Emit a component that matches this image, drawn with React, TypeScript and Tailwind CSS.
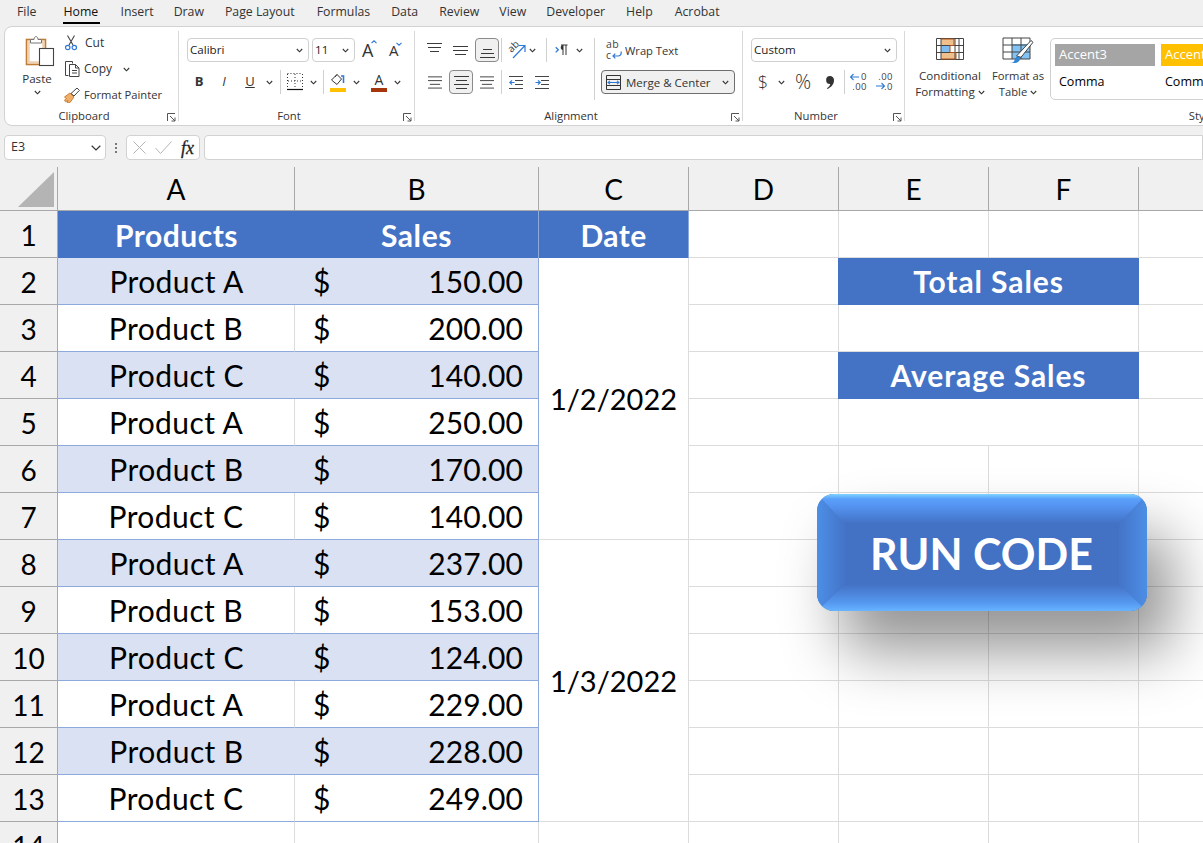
import React from "react";

const ui = "font-['Open_Sans','Liberation_Sans',sans-serif]";
const cal = "font-['Lato','Liberation_Sans',sans-serif]";

function Chev({ className = "" }: { className?: string }) {
  return (
    <svg viewBox="0 0 7 5" className={"w-[7px] h-[5px] " + className} fill="none" stroke="#333" strokeWidth="1.1">
      <path d="M.8 1 3.5 3.8 6.2 1" />
    </svg>
  );
}
function Launcher() {
  return (
    <svg viewBox="0 0 9 9" className="absolute right-[2px] top-[4px] w-[9px] h-[9px]" fill="none" stroke="#555" strokeWidth="1">
      <path d="M.5 8V.5H8M3 3l5 5M8 4.5V8H4.5" />
    </svg>
  );
}
function Group({ w, label, children }: { w: string; label: string; children: React.ReactNode }) {
  return (
    <div className={"my-[4px] h-[90px] flex flex-col shrink-0 border-r border-[#d9d9d9] " + w}>
      <div className="h-[78px] pt-[7px]">{children}</div>
      <div className="relative h-[12px] flex items-center justify-center text-[11.3px] text-[#333] leading-none pt-[1px] pr-[15px]">
        {label}
        <Launcher />
      </div>
    </div>
  );
}
function VSep({ className = "" }: { className?: string }) {
  return <div className={"w-px h-[24px] bg-[#d0d0d0] shrink-0 " + className} />;
}
function Slot({ className, children }: { className: string; children: React.ReactNode }) {
  return <div className={"h-[24px] flex items-center justify-center shrink-0 " + className}>{children}</div>;
}
function Lines({ rows, className = "" }: { rows: [number, number][]; className?: string }) {
  return (
    <svg viewBox="0 0 15 16" className={"w-[15px] h-[16px] " + className} stroke="#3a3a3a" strokeWidth="1">
      {rows.map(([y, x], i) => (
        <line key={i} x1={x} x2={15 - x} y1={y + 0.5} y2={y + 0.5} />
      ))}
    </svg>
  );
}

function PasteIcon() {
  return (
    <svg viewBox="0 0 30 32" className="w-[30px] h-[32px]">
      <rect x="1.5" y="4.5" width="19" height="25" fill="#fbe9d4" stroke="#c07f38" strokeWidth="1.6" />
      <rect x="4" y="7" width="14" height="20" fill="#fff" stroke="#e5b98a" strokeWidth="1" />
      <path d="M5.5 8V4.5h3.5c.4-2 1-3 2-3s1.6 1 2 3h3.5V8z" fill="#fff" stroke="#777" strokeWidth="1" />
      <rect x="14.5" y="13.5" width="14" height="17" fill="#fff" stroke="#444" strokeWidth="1.1" />
    </svg>
  );
}
function CutIcon() {
  return (
    <svg viewBox="0 0 14 16" className="w-[14px] h-[16px]" fill="none">
      <path d="M3.5 .5 9 10M10.5.5 5 10" stroke="#444" strokeWidth="1.1" />
      <circle cx="3.7" cy="12.5" r="2.2" stroke="#2f79d6" strokeWidth="1.2" />
      <circle cx="10.3" cy="12.5" r="2.2" stroke="#2f79d6" strokeWidth="1.2" />
    </svg>
  );
}
function CopyIcon() {
  return (
    <svg viewBox="0 0 17 16" className="w-[17px] h-[16px]" fill="none" stroke="#444" strokeWidth="1">
      <path d="M4.5 14.5h-3V.5h7v2" />
      <path d="M5.500 3.500h6l3.500 3.500v8.500H5.500z" fill="#fff" />
      <path d="M11.500 3.500V7H15M8 9.500h5M8 12h5" />
    </svg>
  );
}
function PainterIcon() {
  return (
    <svg viewBox="0 0 16 16" className="w-[16px] h-[16px]">
      <path d="M.5 10 6 6l4 4-4 5.500c-2 .3-3 0-3 0l1-2-2.500 1.200L.5 13l2-1.500z" fill="#f0b06a" stroke="#c8742a" strokeWidth=".9" />
      <path d="m7 6.500 6-5.500 2.400 2.400L10 9z" fill="#fff" stroke="#444" strokeWidth="1" />
    </svg>
  );
}
function BorderIcon() {
  return (
    <svg viewBox="0 0 16 18" className="w-[16px] h-[18px]" fill="none" stroke="#333" strokeWidth="1">
      <path d="M.5.5h15M.5 1v14M15.500 1v14M8 1v14M1 8h14" strokeDasharray="1 2" />
      <path d="M0 16.500h16" strokeWidth="1.2" stroke="#111" />
    </svg>
  );
}
function FillIcon() {
  return (
    <div className="w-[16px] h-[19px] flex flex-col items-center">
      <svg viewBox="0 0 16 14" className="w-[16px] h-[14px]" fill="none">
        <path d="M7 1.500 11.500 6 7 11.500 1.500 7z" stroke="#333" strokeWidth="1" />
        <path d="M7 1.500 5 4" stroke="#333" strokeWidth="1" />
        <path d="M11 3h2.500v7" stroke="#2f79d6" strokeWidth="1.6" />
      </svg>
      <div className="w-[16px] h-[4px] mt-[1px] bg-[#ffc000]" />
    </div>
  );
}
function OrientIcon() {
  return (
    <div className="relative w-[18px] h-[17px]">
      <span className="absolute left-[-1px] top-[-2px] -rotate-45 text-[10px] leading-[12px] text-[#333]">ab</span>
      <svg viewBox="0 0 18 17" className="absolute inset-0 w-[18px] h-[17px]" fill="none">
        <path d="M5 16 16.500 4M11 3.500h6V10" stroke="#2f79d6" strokeWidth="1.2" />
      </svg>
    </div>
  );
}
function RtlIcon() {
  return (
    <svg viewBox="0 0 13 12" className="w-[13px] h-[12px]" fill="none">
      <path d="m.7 3.200 2.600 2.600-2.600 2.600" stroke="#2f79d6" strokeWidth="1.3" />
      <path d="M6 1h6.500M8 1v10M11 1v10" stroke="#333" strokeWidth="1" />
      <path d="M8 1C5 1 5 6 8 6z" fill="#333" />
    </svg>
  );
}
function IndentIcon({ rev }: { rev?: boolean }) {
  return (
    <svg viewBox="0 0 14 13" className="w-[14px] h-[13px]" fill="none">
      <path d="M0 .5h14M6 4.500h8M6 8.500h8M0 12.500h14" stroke="#444" strokeWidth="1" />
      {rev ? (
        <path d="M5.500 6.500H.8M3 4.300.8 6.500 3 8.700" stroke="#2f79d6" strokeWidth="1.2" />
      ) : (
        <path d="M.5 6.500h4.700M3 4.300l2.200 2.200L3 8.700" stroke="#2f79d6" strokeWidth="1.2" />
      )}
    </svg>
  );
}
function WrapArrow() {
  return (
    <svg viewBox="0 0 10 8" className="w-[10px] h-[8px] ml-[1px]" fill="none" stroke="#2f79d6" strokeWidth="1.2">
      <path d="M9.200.5v1.500a3 3 0 0 1-3 3H1M3.300 2.700 1 5l2.300 2.300" />
    </svg>
  );
}
function MergeIcon() {
  return (
    <svg viewBox="0 0 15 15" className="w-[15px] h-[15px]" fill="none">
      <path d="M.5.5h14v14H.5zM.5 4.500h14M.5 10.500h14" stroke="#333" strokeWidth="1" />
      <path d="M2 7.500h11M4 5.800 2 7.500l2 1.700M11 5.800l2 1.700-2 1.700" stroke="#2f79d6" strokeWidth="1.1" />
    </svg>
  );
}
function CondIcon() {
  return (
    <svg viewBox="0 0 28 22" className="w-[28px] h-[22px]">
      <rect x="5" y="1" width="13" height="6.500" fill="#f0c08c" />
      <rect x="5" y="7.500" width="9" height="7" fill="#7fbdf0" />
      <rect x="5" y="14.500" width="15" height="6.500" fill="#f0c08c" />
      <path d="M.5.5h27v21H.5zM.5 7.500h27M.5 14.500h27M5 .5v21M19 .5v21M23 .5v21" fill="none" stroke="#444" strokeWidth="1" />
      <path d="M5 1h13v6.500H14V14.500h6V21H5" fill="none" stroke="#a8521c" strokeWidth="1" />
    </svg>
  );
}
function TableIcon() {
  return (
    <svg viewBox="0 0 32 27" className="w-[32px] h-[27px]">
      <rect x="10" y="7" width="18" height="15" fill="#83c3f3" />
      <path d="M1 1h27v21H1zM1 8h27M1 15h27M10 1v21M19 1v21" fill="none" stroke="#444" strokeWidth="1" />
      <path d="M14.500 19 29 3.500l2 1.800-12 15z" fill="#fff" stroke="#444" strokeWidth="1" />
      <path d="M8 26c3 0 4-1 5-4s3-3 5-2c1 3-2 6-5 6z" fill="#2f86d6" />
    </svg>
  );
}
function DecIcon({ inc }: { inc?: boolean }) {
  return (
    <div className="w-[17px] h-[20px] flex flex-col items-end text-[9.5px] leading-[10px] tracking-[0.5px] text-[#444] relative">
      <span>{inc ? ".00" : "0"}</span>
      <span>{inc ? ".0" : ".00"}</span>
      <svg viewBox="0 0 9 8" className={"absolute w-[9px] h-[8px] " + (inc ? "left-0 top-[10px]" : "left-0 top-[1px]")} fill="none" stroke="#2f79d6" strokeWidth="1.1">
        {inc ? <path d="M0 4h8.400M5.500 1l3 3-3 3" /> : <path d="M9 4H.6M3.500 1l-3 3 3 3" />}
      </svg>
    </div>
  );
}
function Caret({ down }: { down?: boolean }) {
  return (
    <svg viewBox="0 0 6 4" className="absolute -top-[1px] -right-[3px] w-[6px] h-[4px]" fill="none" stroke="#2f79d6" strokeWidth="1.1">
      <path d={down ? "M.5.8 3 3.200 5.500.8" : "M.5 3.200 3 .8l2.500 2.400"} />
    </svg>
  );
}

function Select({ className, text }: { className: string; text: string }) {
  return (
    <div className={"h-[24px] rounded-[4px] border border-[#d0d0d0] bg-white flex items-center justify-between pl-[2px] pr-[5px] shrink-0 text-[11.6px] text-[#222] " + className}>
      <span>{text}</span>
      <Chev />
    </div>
  );
}

function Ribbon() {
  return (
    <div className={"ml-[4px] w-[1500px] h-[100px] rounded-l-[8px] border border-[#d2d2d2] bg-white flex pl-0 text-[#333] " + ui}>
      <Group w="w-[174px]" label="Clipboard">
        <div className="flex -mt-[7px]">
          <div className="w-[59px] pl-[16px] pt-[4px] flex flex-col items-start">
            <div className="pl-[4px]"><PasteIcon /></div>
            <div className="w-[32px] text-center text-[11.6px] leading-[16px] mt-[4px]">Paste</div>
            <div className="w-[32px] flex justify-center mt-[3px]"><Chev /></div>
          </div>
          <div className="text-[12px] -mt-[1px]">
            <div className="h-[26px] flex items-center"><div className="w-[21px] flex"><CutIcon /></div>Cut</div>
            <div className="h-[26px] flex items-center"><div className="w-[20px] flex"><CopyIcon /></div>Copy<Chev className="ml-[11px]" /></div>
            <div className="h-[26px] flex items-center text-[11.2px]"><div className="w-[20px] flex"><PainterIcon /></div>Format Painter</div>
          </div>
        </div>
      </Group>

      <Group w="w-[236px]" label="Font">
        <div className="flex items-center pl-[8px]">
          <Select className="w-[122px]" text="Calibri" />
          <Select className="w-[43px] ml-[3px]" text="11" />
          <div className="ml-[7px] w-[12px] text-[18px] leading-none relative">A<Caret /></div>
          <div className="ml-[15px] w-[10px] text-[15px] leading-none relative">A<Caret down /></div>
        </div>
        <div className="flex items-center pl-[8px] mt-[8px]">
          <Slot className="w-[24px] text-[13px] font-bold">B</Slot>
          <Slot className="w-[26px] text-[13px] italic">I</Slot>
          <Slot className="w-[26px] text-[13px] underline">U</Slot>
          <Slot className="w-[13px]"><Chev /></Slot>
          <VSep className="ml-[4px]" />
          <Slot className="w-[16px] ml-[6px]"><BorderIcon /></Slot>
          <Slot className="w-[20px]"><Chev /></Slot>
          <VSep />
          <Slot className="w-[16px] ml-[6px]"><FillIcon /></Slot>
          <Slot className="w-[20px]"><Chev /></Slot>
          <Slot className="w-[16px] ml-[5px]">
            <div className="flex flex-col items-center">
              <span className="text-[14px] leading-[14px]">A</span>
              <div className="w-[16px] h-[4px] mt-[1px] bg-[#a5360c]" />
            </div>
          </Slot>
          <Slot className="w-[20px]"><Chev /></Slot>
        </div>
      </Group>

      <Group w="w-[328px]" label="Alignment">
        <div className="flex">
          <div className="w-[179px]">
            <div className="flex items-center pl-[12px]">
              <Slot className="w-[15px]"><Lines rows={[[1, 0], [5, 1], [9, 3]]} /></Slot>
              <Slot className="w-[15px] ml-[11px]"><Lines rows={[[4, 0], [8, 0], [12, 2]]} /></Slot>
              <Slot className="w-[24px] ml-[7px] rounded-[4px] border border-[#8a8a8a] bg-[#f0f0f0]"><Lines rows={[[7, 3], [11, 1], [15, 0]]} /></Slot>
              <VSep className="ml-[2px]" />
              <Slot className="w-[18px] ml-[6px]"><OrientIcon /></Slot>
              <Slot className="w-[12px]"><Chev /></Slot>
              <VSep className="ml-[8px]" />
              <Slot className="w-[13px] ml-[8px]"><RtlIcon /></Slot>
              <Slot className="w-[22px]"><Chev /></Slot>
            </div>
            <div className="flex items-center pl-[13px] mt-[8px]">
              <Slot className="w-[14px]"><Lines rows={[[2, 0], [6, 0], [10, 2], [14, 0]]} /></Slot>
              <Slot className="w-[24px] ml-[7px] rounded-[4px] border border-[#8a8a8a] bg-[#f0f0f0]"><Lines rows={[[2, 0], [6, 2], [10, 0], [14, 2]]} /></Slot>
              <Slot className="w-[14px] ml-[7px]"><Lines rows={[[2, 0], [6, 0], [10, 2], [14, 0]]} /></Slot>
              <VSep className="ml-[7px]" />
              <Slot className="w-[14px] ml-[7px]"><IndentIcon rev /></Slot>
              <Slot className="w-[14px] ml-[12px]"><IndentIcon /></Slot>
            </div>
          </div>
          <div className="w-px h-[62px] bg-[#d0d0d0] shrink-0" />
          <div className="text-[11.2px]">
            <div className="h-[24px] flex items-center pl-[11px]">
              <div className="w-[19px] flex flex-col -mt-[1px] text-[#444]">
                <span className="text-[10.5px] leading-[11px] tracking-[0.5px]">ab</span>
                <div className="flex items-center"><span className="text-[10.5px] leading-[11px]">c</span><WrapArrow /></div>
              </div>
              <span className="pt-[2px]">Wrap Text</span>
            </div>
            <div className="ml-[6px] mt-[8px] w-[134px] h-[24px] rounded-[4px] border border-[#6e6e6e] bg-[#f0f0f0] flex items-center pl-[4px] pr-[5px] text-[11.5px]">
              <MergeIcon />
              <span className="ml-[5px] flex-1 pt-[2px]">Merge &amp; Center</span>
              <Chev />
            </div>
          </div>
        </div>
      </Group>

      <Group w="w-[162px]" label="Number">
        <div className="pl-[8px]">
          <Select className="w-[146px]" text="Custom" />
          <div className="flex items-center mt-[8px]">
            <Slot className="w-[24px] text-[18px] font-light">$</Slot>
            <Slot className="w-[12px]"><Chev /></Slot>
            <Slot className="w-[24px] ml-[4px] text-[20px] font-light">%</Slot>
            <Slot className="w-[24px] ml-[3px]">
              <svg viewBox="0 0 8 13" className="w-[8px] h-[13px]"><path d="M4 0a4 4 0 0 1 4 4.200C8 8 5.500 11 1.500 13l-.6-.8C3 10.800 4 9.500 4.300 8A4 4 0 1 1 4 0z" fill="#333" /></svg>
            </Slot>
            <VSep className="ml-[2px]" />
            <Slot className="w-[17px] ml-[5px]"><DecIcon /></Slot>
            <Slot className="w-[17px] ml-[9px]"><DecIcon inc /></Slot>
          </div>
        </div>
      </Group>

      <div className="my-[4px] w-[598px] h-[90px] flex flex-col shrink-0">
        <div className="h-[78px] pt-[7px] flex">
          <div className="ml-[9px] w-[72px] flex flex-col items-center text-[11.6px] leading-[16px]">
            <div className="h-[30px]"><CondIcon /></div>
            <div>Conditional</div>
            <div className="flex items-center">Formatting<Chev className="ml-[3px]" /></div>
          </div>
          <div className="w-[64px] flex flex-col items-center text-[11.2px] leading-[16px]">
            <div className="h-[30px] -mt-[1px] mb-[1px]"><TableIcon /></div>
            <div className="whitespace-nowrap">Format as</div>
            <div className="flex items-center">Table<Chev className="ml-[3px]" /></div>
          </div>
          <div className="w-[300px] h-[62px] rounded-l-[5px] border border-[#d0d0d0] pl-[4px] pt-[5px]">
            <div className="flex text-[13px]">
              <div className="w-[100px] h-[22px] bg-[#a5a5a5] text-white pl-[4px] flex items-center">Accent3</div>
              <div className="w-[100px] h-[22px] ml-[6px] bg-[#ffc000] text-white pl-[4px] flex items-center">Accent4</div>
            </div>
            <div className="flex mt-[5px] text-black text-[12.5px]">
              <div className="w-[100px] h-[22px] pl-[4px] flex items-center">Comma</div>
              <div className="w-[100px] h-[22px] ml-[6px] pl-[4px] flex items-center">Comma [0]</div>
            </div>
          </div>
        </div>
        <div className="h-[12px] flex items-center justify-center text-[11.3px] leading-none pt-[1px]">Styles</div>
      </div>
    </div>
  );
}

function FormulaBar() {
  return (
    <div className={"h-[25px] mt-[9px] flex text-[12.5px] text-[#333] " + ui}>
      <div className="ml-[4px] w-[102px] rounded-[4px] border border-[#d2d2d2] bg-white flex items-center justify-between pl-[6px] pr-[4px]">
        <span>E3</span>
        <svg viewBox="0 0 10 6" className="w-[10px] h-[6px]" fill="none" stroke="#333" strokeWidth="1.2"><path d="M.7.8 5 5l4.300-4.200" /></svg>
      </div>
      <div className="w-[20px] flex flex-col items-center justify-center gap-[2px]">
        <i className="w-[2px] h-[2px] bg-[#777]" /><i className="w-[2px] h-[2px] bg-[#777]" /><i className="w-[2px] h-[2px] bg-[#777]" />
      </div>
      <div className="w-[74px] rounded-[4px] border border-[#d2d2d2] bg-white flex items-center pl-[6px]">
        <svg viewBox="0 0 13 13" className="w-[13px] h-[13px]" fill="none" stroke="#b5b5b5" strokeWidth="1"><path d="m.5.5 12 12M12.500.5l-12 12" /></svg>
        <svg viewBox="0 0 17 13" className="w-[17px] h-[13px] ml-[9px]" fill="none" stroke="#b5b5b5" strokeWidth="1"><path d="m.5 7 5 5.500L16.500.5" /></svg>
        <span className="ml-[9px] text-[18px] leading-none italic font-['Liberation_Serif',serif] text-[#222] [-webkit-text-stroke:0.3px_#222]">fx</span>
      </div>
      <div className="ml-[4px] flex-1 rounded-l-[4px] border border-[#d2d2d2] bg-white" />
    </div>
  );
}

const gl = "border-r border-b border-[#dcdcdc]";
const tblLine = "border-b border-[#8ea9db]";
const rowHead = "text-[28px] bg-[#f0f0f0] border-r border-b border-[#a8a8a8] flex items-center justify-center";

const rows: [string, string][] = [
  ["Product A", "150.00"],
  ["Product B", "200.00"],
  ["Product C", "140.00"],
  ["Product A", "250.00"],
  ["Product B", "170.00"],
  ["Product C", "140.00"],
  ["Product A", "237.00"],
  ["Product B", "153.00"],
  ["Product C", "124.00"],
  ["Product A", "229.00"],
  ["Product B", "228.00"],
  ["Product C", "249.00"],
];

function Sheet() {
  return (
    <div className={"mt-[7px] grid grid-cols-[58px_237px_244px_150px_150px_150px_150px_80px] grid-rows-[44px_repeat(14,47px)] bg-white text-black text-[30px] " + cal}>
      <div className="bg-[#f0f0f0] border-r border-b border-[#a8a8a8] flex">
        <div className="ml-[18px] mt-[5px] w-[36px] h-[35px] bg-[#b4b4b4] [clip-path:polygon(100%_0,100%_100%,0_100%)]" />
      </div>
      {["A", "B", "C", "D", "E", "F", ""].map((c, i) => (
        <div key={i} className={rowHead}>{c}</div>
      ))}

      <div className={rowHead + " pt-[1px]"}>1</div>
      <div className="bg-[#4472c4] text-white font-bold tracking-[0.5px] flex items-center justify-center pt-[1px]">Products</div>
      <div className="bg-[#4472c4] text-white font-bold tracking-[0.6px] flex items-center justify-center border-r border-[#8ea9db] pt-[1px]">Sales</div>
      <div className="bg-[#4472c4] text-white font-bold tracking-[0.4px] flex items-center justify-center border-r border-[#8ea9db] pt-[1px]">Date</div>
      <div className={gl} />
      <div className={gl} />
      <div className={gl} />
      <div className={gl} />

      {rows.map(([p, v], i) => {
        const band = i % 2 === 0;
        const rowBg = band ? "bg-[#d9e1f2]" : "bg-white";
        return (
          <React.Fragment key={i}>
            <div className={rowHead + " pt-[1px]"}>{i + 2}</div>
            <div className={`${rowBg} ${tblLine} tracking-[0.4px] pt-[1px] flex items-center justify-center ${band ? "" : "border-r border-r-[#dcdcdc]"}`}>{p}</div>
            <div className={`${rowBg} ${tblLine} border-r border-r-[#8ea9db] pt-[1px] flex items-center justify-between pl-[18px] pr-[15px]`}>
              <span>$</span>
              <span className="tracking-[0.1px]">{v}</span>
            </div>
            {i === 0 && <div className={`row-span-6 ${gl} text-[29px] flex items-center justify-center`}>1/2/2022</div>}
            {i === 6 && <div className={`row-span-6 ${gl} text-[29px] flex items-center justify-center`}>1/3/2022</div>}
            <div className={gl} />
            {i === 0 && <div className="col-span-2 -ml-px bg-[#4472c4] text-white font-bold tracking-[0.9px] flex items-center justify-center">Total Sales</div>}
            {i === 1 && <div className={`col-span-2 ${gl}`} />}
            {i === 2 && <div className="col-span-2 -ml-px bg-[#4472c4] text-white font-bold tracking-[0.9px] flex items-center justify-center">Average Sales</div>}
            {i === 3 && <div className={`col-span-2 ${gl}`} />}
            {i > 3 && <div className={gl} />}
            {i > 3 && <div className={gl} />}
            <div className={gl} />
          </React.Fragment>
        );
      })}

      <div className="text-[28px] bg-[#f0f0f0] border-r border-[#a8a8a8] flex items-center justify-center">14</div>
      {[0, 1, 2, 3, 4, 5, 6].map((i) => (
        <div key={i} className="border-r border-[#dcdcdc]" />
      ))}
    </div>
  );
}

function RunButton() {
  return (
    <div className={"absolute left-[817px] top-[494px] w-[330px] h-[117px] rounded-[17px] shadow-[25px_40px_60px_rgba(0,0,0,0.42)] overflow-hidden bg-[#4371c4] flex items-center justify-center " + cal}>
      <svg viewBox="0 0 330 117" className="absolute inset-0 w-full h-full">
        <defs>
          <linearGradient id="t" x1="0" y1="0" x2="0" y2="1">
            <stop offset="0" stopColor="#7fd4ff" />
            <stop offset=".16" stopColor="#5aa0fb" />
            <stop offset=".45" stopColor="#5391ee" />
            <stop offset="1" stopColor="#4371c4" />
          </linearGradient>
          <linearGradient id="b" x1="0" y1="1" x2="0" y2="0">
            <stop offset="0" stopColor="#67b4ff" />
            <stop offset=".3" stopColor="#5598f0" />
            <stop offset="1" stopColor="#4371c4" />
          </linearGradient>
          <linearGradient id="l" x1="0" y1="0" x2="1" y2="0">
            <stop offset="0" stopColor="#4c8fe6" />
            <stop offset="1" stopColor="#4474c8" />
          </linearGradient>
          <linearGradient id="r" x1="1" y1="0" x2="0" y2="0">
            <stop offset="0" stopColor="#4c8fe6" />
            <stop offset="1" stopColor="#4474c8" />
          </linearGradient>
        </defs>
        <polygon points="0,0 28,30 28,90 0,117" fill="url(#l)" />
        <polygon points="330,0 302,30 302,90 330,117" fill="url(#r)" />
        <polygon points="0,0 330,0 302,30 28,30" fill="url(#t)" />
        <polygon points="0,117 330,117 302,90 28,90" fill="url(#b)" />
      </svg>
      <span className="relative text-white font-bold text-[43px] leading-none pt-[2px] pr-[1px]">RUN CODE</span>
    </div>
  );
}

export default function App() {
  return (
    <div className="relative w-[1203px] h-[843px] overflow-hidden bg-[#f0f0f0]">
      <div className={"h-[24px] mb-[2px] flex items-center text-[12.3px] text-[#333] " + ui}>
        <span className="ml-[17px]">File</span>
        <span className="ml-[27px] w-[37px] relative font-medium text-[#111]">Home<i className="absolute left-0 right-0 -bottom-[3px] h-[2px] bg-black" /></span>
        <span className="ml-[20px]">Insert</span>
        <span className="ml-[20px]">Draw</span>
        <span className="ml-[21px]">Page Layout</span>
        <span className="ml-[22px]">Formulas</span>
        <span className="ml-[21px]">Data</span>
        <span className="ml-[21px]">Review</span>
        <span className="ml-[20px]">View</span>
        <span className="ml-[20px]">Developer</span>
        <span className="ml-[21px]">Help</span>
        <span className="ml-[22px]">Acrobat</span>
      </div>
      <Ribbon />
      <FormulaBar />
      <Sheet />
      <RunButton />
    </div>
  );
}
